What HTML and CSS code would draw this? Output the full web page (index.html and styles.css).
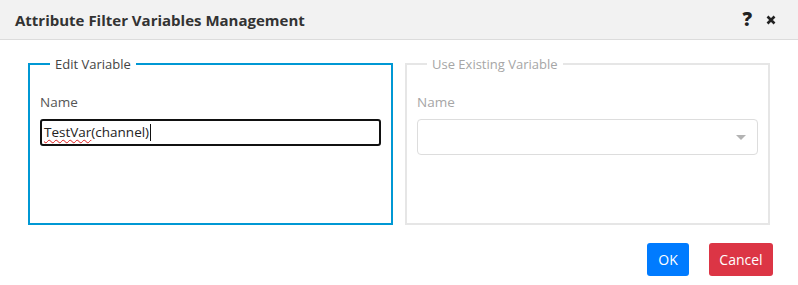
FILE: index.html
```html
<!DOCTYPE html>
<html lang="en">
  <head>
    <meta charset="UTF-8" />
    <meta name="viewport" content="width=device-width, initial-scale=1.0" />
    <title>Attribute Filter Variables Management</title>
    <link rel="stylesheet" href="styles.css">
  </head>
  <body>
    <div class="dialog">
      <div class="dialog-header">
        <span class="dialog-title">Attribute Filter Variables Management</span>
        <div class="dialog-tools">
          <span class="dialog-tool">?</span>
          <span class="dialog-tool">
            <svg width="10" height="10" viewBox="0 0 10 10" xmlns="http://www.w3.org/2000/svg">
              <path d="M1.5 1.5L8.5 8.5M8.5 1.5L1.5 8.5" stroke="#222" stroke-width="2.6" stroke-linecap="butt" />
            </svg>
          </span>
        </div>
      </div>

      <div class="dialog-body">
        <fieldset class="panel panel--active">
          <legend class="panel-legend">Edit Variable</legend>
          <label class="field-label">Name</label>
          <div class="text-input">
            <span class="misspelled">TestVar</span>(channel)<span class="caret"></span>
          </div>
        </fieldset>

        <fieldset class="panel panel--disabled">
          <legend class="panel-legend">Use Existing Variable</legend>
          <label class="field-label">Name</label>
          <div class="select-input">
            <svg width="10" height="5" viewBox="0 0 10 5" xmlns="http://www.w3.org/2000/svg">
              <path d="M0 0H10L5 5Z" fill="#b3b3b3" />
            </svg>
          </div>
        </fieldset>
      </div>

      <div class="dialog-footer">
        <button class="btn btn--ok">OK</button>
        <button class="btn btn--cancel">Cancel</button>
      </div>
    </div>
  </body>
</html>
```

FILE: styles.css
```css
body {
  margin: 0;
  background: #ffffff;
  font-family: "Open Sans", "Noto Sans", sans-serif;
  color: #222222;
}

.dialog {
  width: 798px;
  height: 285px;
  background: #ffffff;
}

/* ヘッダー */
.dialog-header {
  height: 39px;
  background: #f2f2f2;
  border-bottom: 1px solid #dcdcdc;
  display: flex;
  align-items: center;
  justify-content: space-between;
  padding: 0 22px 0 15px;
}

.dialog-title {
  font-size: 15px;
  font-weight: 700;
  color: #333333;
}

.dialog-tools {
  display: flex;
  align-items: center;
  gap: 14px;
}

.dialog-tool {
  font-size: 19px;
  font-weight: 800;
  color: #222222;
  line-height: 1;
  display: flex;
  align-items: center;
}

/* 本体 */
.dialog-body {
  display: grid;
  grid-template-columns: 365px 365px;
  gap: 12px;
  padding: 14px 28px 0;
}

.panel {
  margin: 0;
  height: 171px;
  box-sizing: border-box;
  padding: 19px 10px 10px;
  border: 2px solid #e6e6e6;
  min-width: 0;
}

.panel--active {
  border-color: #0098d4;
}

.panel-legend {
  margin-left: 10px;
  padding: 0 5px;
  font-size: 13px;
  line-height: 20px;
  color: #444444;
}

.panel--disabled .panel-legend,
.panel--disabled .field-label {
  color: #a6a6a6;
}

.field-label {
  display: block;
  font-size: 13.5px;
  line-height: 18px;
  color: #555555;
  margin-bottom: 8px;
}

.text-input {
  height: 27px;
  box-sizing: border-box;
  border: 2px solid #111111;
  border-radius: 3px;
  padding: 0 2px;
  font-size: 13.5px;
  line-height: 23px;
  color: #222222;
  display: flex;
  align-items: center;
}

.misspelled {
  text-decoration: underline wavy #e01b1b;
  text-decoration-thickness: 1px;
  text-underline-offset: 2px;
}

.caret {
  display: inline-block;
  width: 1px;
  height: 17px;
  background: #111111;
  margin-left: 1px;
}

.select-input {
  height: 36px;
  box-sizing: border-box;
  border: 1px solid #dddddd;
  border-radius: 4px;
  display: flex;
  align-items: center;
  justify-content: flex-end;
  padding-right: 11px;
}

/* フッター */
.dialog-footer {
  display: flex;
  justify-content: flex-end;
  gap: 20px;
  padding: 18px 25px 0;
}

.btn {
  height: 33px;
  border: none;
  border-radius: 3px;
  font-family: "Open Sans", "Noto Sans", sans-serif;
  font-size: 14px;
  color: #ffffff;
  cursor: pointer;
}

.btn--ok {
  width: 42px;
  background: #007bff;
}

.btn--cancel {
  width: 64px;
  background: #dc3545;
}
```
